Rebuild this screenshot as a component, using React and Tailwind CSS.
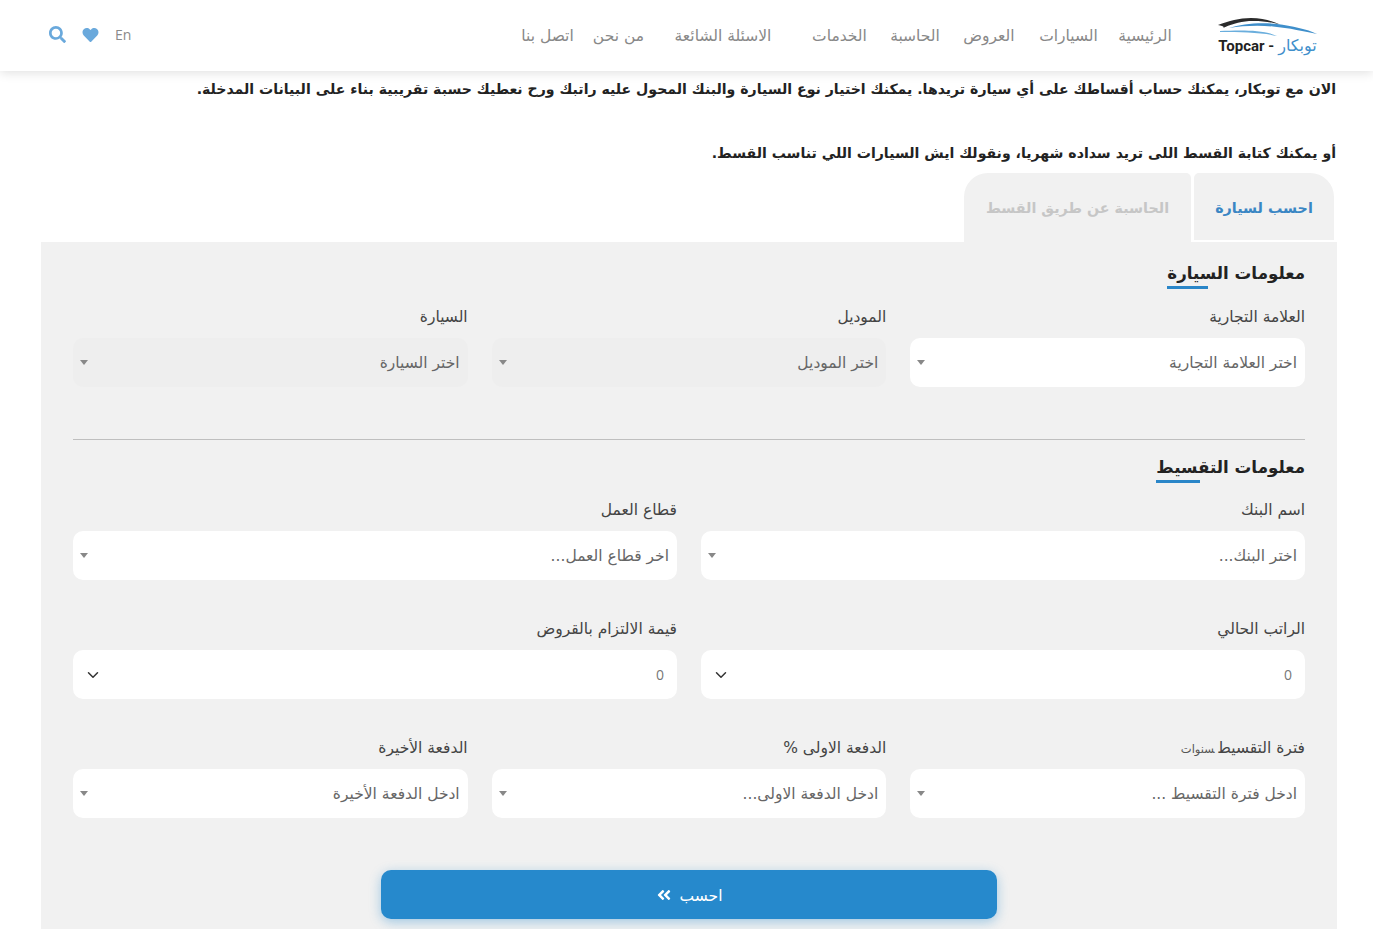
import { FaSearch, FaHeart, FaAngleDoubleLeft } from 'react-icons/fa';
import { ChevronDown } from 'lucide-react';

const font = 'font-["DejaVu_Sans",sans-serif]';

const navLinks = [
  { label: 'الرئيسية', cls: 'w-[54px] ml-[20px]' },
  { label: 'السيارات', cls: 'w-[59px] ml-[23px]' },
  { label: 'العروض', cls: 'w-[54px] ml-[20px]' },
  { label: 'الحاسبة', cls: 'w-[54px] ml-[21px]' },
  { label: 'الخدمات', cls: 'w-[55px] ml-[36px]' },
  { label: 'الاسئلة الشائعة', cls: 'w-[106px] ml-[26px]' },
  { label: 'من نحن', cls: 'w-[51px] ml-[18px]' },
  { label: 'اتصل بنا', cls: 'w-[55px]' },
];

function Logo() {
  return (
    <div className="flex w-[101px] flex-col items-center" dir="ltr">
      <svg width="101" height="20" viewBox="0 0 101 20" fill="none">
        <path d="M1 8 C12 4 22 1 34 1 C46 1 55 4 63 7.500 C52 4.500 42 3.500 32 4 C22 5 12 8 6 11 C8 9.500 5 9 1 8Z" fill="#2b2b2b" />
        <path d="M60 7 C75 9 90 12 100 17 C88 14.500 72 11 56 9.500 C40 8 25 9 12 11 C25 7 42 5 60 7Z" fill="#3f8fcb" />
        <path d="M3 14 C20 13.500 45 12 60 19 C45 15.500 25 15 3 15Z" fill="#6aaedd" />
      </svg>
      <div className="flex items-center gap-[4px] whitespace-nowrap text-[15px] leading-[18px]">
        <span className="font-['Roboto',sans-serif] font-bold text-[#222222]">Topcar -</span>
        <span className={`${font} text-[16px] text-[#3f8fcb]`}>توبكار</span>
      </div>
    </div>
  );
}

function Header() {
  return (
    <header className="relative z-10 flex h-[71px] shrink-0 items-center justify-between bg-white pl-[49px] pr-[55px] shadow-[0_2px_10px_rgba(0,0,0,0.12)]">
      <div className="flex items-center">
        <div className="ml-[45px]">
          <Logo />
        </div>
        <nav className="flex items-center pt-[1px]">
          {navLinks.map((link) => (
            <a key={link.label} className={`${link.cls} whitespace-nowrap text-center text-[15.500px] leading-[20px] text-[#888888]`}>
              {link.label}
            </a>
          ))}
        </nav>
      </div>
      <div className="flex items-center gap-[16px] pb-[2px]" dir="ltr">
        <FaSearch className="h-[17px] w-[17px] text-[#6aa9dc]" />
        <FaHeart className="h-[16px] w-[17px] text-[#6aa9dc]" />
        <span className="font-['Open_Sans',sans-serif] text-[14px] text-[#8a8a8a]">En</span>
      </div>
    </header>
  );
}

function Select({ text, disabled, number }) {
  return (
    <div className={`flex h-[49px] items-center justify-between rounded-[10px] pr-[8px] text-[15.500px] text-[#666666] ${disabled ? 'bg-[#eeeeee]' : 'bg-white'} ${number ? 'pl-[11px]' : 'pl-[7px]'}`}>
      <span className={number ? "pr-[5px] font-['Open_Sans',sans-serif] text-[14px] text-[#777777]" : 'pt-[3px]'}>{text}</span>
      {number ? (
        <ChevronDown className="h-[18px] w-[18px] text-[#333333]" strokeWidth={2} />
      ) : (
        <span className="h-0 w-0 border-x-[4px] border-t-[5px] border-x-transparent border-t-[#888888]" />
      )}
    </div>
  );
}

function Field({ label, hint, text, disabled, number }) {
  return (
    <div>
      <label className="mb-[11px] block h-[20px] text-[15.500px] leading-[20px] text-[#444444]">
        {label}
        {hint && <small className="mr-[4px] text-[11.500px] leading-none text-[#555555]">{hint}</small>}
      </label>
      <Select text={text} disabled={disabled} number={number} />
    </div>
  );
}

function SectionTitle({ title, barWidth }) {
  return (
    <div className="flex">
      <h3 className="relative pb-[5px] text-[16.700px] font-bold leading-[22px] text-[#222222]">
        {title}
        <span className={`absolute bottom-0 left-0 h-[3px] bg-[#2a86c8] ${barWidth}`} />
      </h3>
    </div>
  );
}

export default function App() {
  return (
    <div dir="rtl" className={`${font} flex h-screen flex-col overflow-hidden bg-white`}>
      <Header />

      <main className="flex flex-1 flex-col pl-[41px] pr-[36px]">
        <p className="mr-[1px] mt-[8px] text-[14.100px] font-bold leading-[20px] text-[#222222]">
          الان مع توبكار، يمكنك حساب أقساطك على أي سيارة تريدها. يمكنك اختيار نوع السيارة والبنك المحول عليه راتبك ورح نعطيك حسبة تقريبية بناء على البيانات المدخلة.
        </p>
        <p className="mr-[1px] mt-[44px] text-[14.100px] font-bold leading-[20px] text-[#222222]">
          أو يمكنك كتابة القسط اللى تريد سداده شهريا، ونقولك ايش السيارات اللي تناسب القسط.
        </p>

        {/* Tabs */}
        <div className="mt-[10px] flex h-[69px] pr-[3px]">
          <button className="h-[67px] w-[140px] rounded-tl-[5px] rounded-tr-[24px] bg-[#f1f1f1] pt-[4px] text-[14.300px] font-bold text-[#3a86c4]">
            احسب لسيارة
          </button>
          <button className="mr-[3px] h-[69px] w-[227px] rounded-tl-[24px] rounded-tr-[5px] bg-[#f1f1f1] pt-[2px] text-[14.300px] font-bold text-[#c6c6c6]">
            الحاسبة عن طريق القسط
          </button>
        </div>

        {/* Form panel */}
        <section className="flex-1 bg-[#f1f1f1] px-[32px] pt-[20px]">
          <SectionTitle title="معلومات السيارة" barWidth="w-[41px]" />
          <div className="mt-[18px] grid grid-cols-3 gap-x-[24px]">
            <Field label="العلامة التجارية" text="اختر العلامة التجارية" />
            <Field label="الموديل" text="اختر الموديل" disabled />
            <Field label="السيارة" text="اختر السيارة" disabled />
          </div>

          <hr className="mb-[16px] mt-[52px] border-[#bfbfbf]" />

          <SectionTitle title="معلومات التقسيط" barWidth="w-[44px]" />
          <div className="mt-[17px] grid grid-cols-2 gap-x-[24px] gap-y-[39px]">
            <Field label="اسم البنك" text="اختر البنك..." />
            <Field label="قطاع العمل" text="اخر قطاع العمل..." />
            <Field label="الراتب الحالي" text="0" number />
            <Field label="قيمة الالتزام بالقروض" text="0" number />
          </div>
          <div className="mt-[39px] grid grid-cols-3 gap-x-[24px]">
            <Field label="فترة التقسيط" hint="سنوات" text="ادخل فترة التقسيط ..." />
            <Field label="الدفعة الاولى %" text="ادخل الدفعة الاولى..." />
            <Field label="الدفعة الأخيرة" text="ادخل الدفعة الأخيرة" />
          </div>

          <div className="mt-[52px] flex justify-center">
            <button className="flex h-[49px] w-[616px] items-center justify-center gap-[8px] rounded-[10px] bg-[#2689cc] text-[15.500px] text-white shadow-[0_3px_12px_rgba(38,137,204,0.4)]">
              <span className="pt-[4px]">احسب</span>
              <FaAngleDoubleLeft className="h-[16px] w-[16px]" />
            </button>
          </div>
        </section>
      </main>
    </div>
  );
}
